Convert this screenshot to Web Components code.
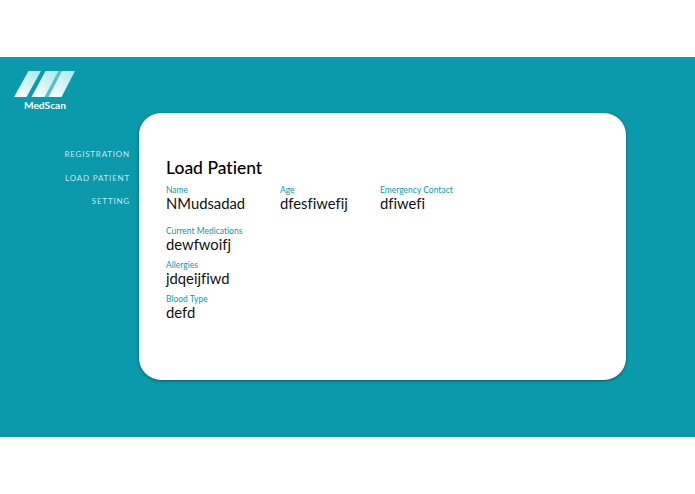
<!DOCTYPE html>
<html>
<head>
<meta charset="utf-8">
<title>MedScan</title>
<style>
html, body { margin: 0; padding: 0; background: #fff; }
body { font-family: Lato, "Liberation Sans", sans-serif; }
</style>
</head>
<body>
<med-app>
  <med-sidebar slot="side">
    <med-nav-link>REGISTRATION</med-nav-link>
    <med-nav-link>LOAD PATIENT</med-nav-link>
    <med-nav-link>SETTING</med-nav-link>
  </med-sidebar>
  <patient-card heading="Load Patient">
    <div style="display:flex;height:37px">
      <patient-field label="Name" value="NMudsadad" style="width:114px"></patient-field>
      <patient-field label="Age" value="dfesfiwefij" style="width:100px"></patient-field>
      <patient-field label="Emergency Contact" value="dfiwefi"></patient-field>
    </div>
    <patient-field label="Current Medications" value="dewfwoifj" style="margin-top:4px"></patient-field>
    <patient-field label="Allergies" value="jdqeijfiwd"></patient-field>
    <patient-field label="Blood Type" value="defd"></patient-field>
  </patient-card>
</med-app>

<script>
//App shell//////////////////////////////////////////////////////////
const appTemplate = document.createElement("template");
appTemplate.innerHTML = `
<style>
:host{
    display: block;
    height: 494px;
    padding: 57px 0;
    box-sizing: border-box;
}
.band{
    display: flex;
    height: 380px;
    background-color: #0a9aab;
}
</style>
<div class="band">
    <slot name="side"></slot>
    <slot></slot>
</div>
`;
class MedApp extends HTMLElement {
    constructor() {
        super();
        this.attachShadow({ mode: "open" });
        this.shadowRoot.appendChild(appTemplate.content.cloneNode(true));
    }
}

//Sidebar////////////////////////////////////////////////////////////
const sidebarTemplate = document.createElement("template");
sidebarTemplate.innerHTML = `
<style>
:host{
    display: block;
    width: 139px;
    flex: none;
}
.logo{
    display: flex;
    flex-direction: column;
    align-items: flex-start;
    padding: 14px 0 0 14px;
}
svg{ display: block; }
.name{
    width: 62px;
    margin-top: 2px;
    text-align: center;
    color: #fff;
    font: 700 10.2px/13px Lato, "Liberation Sans", sans-serif;
}
nav{
    display: flex;
    flex-direction: column;
    align-items: flex-end;
    gap: 9.5px;
    margin-top: 35px;
    padding-right: 9px;
}
</style>
<div class="logo">
    <svg width="61" height="26" viewBox="0 0 61 26">
        <defs>
            <linearGradient id="bar" x1="0" y1="1" x2="1" y2="0">
                <stop offset="0" stop-color="#ffffff"/>
                <stop offset="1" stop-color="#a8e9ed"/>
            </linearGradient>
        </defs>
        <polygon points="30,26 36,26 50,0 44,0" fill="#52c2ca"/>
        <polygon points="0,26 12.5,26 27,0 14.5,0" fill="url(#bar)"/>
        <polygon points="17.5,26 30.5,26 44.5,0 31.5,0" fill="url(#bar)"/>
        <polygon points="34.5,26 47.5,26 61,0 48,0" fill="url(#bar)"/>
    </svg>
    <div class="name">MedScan</div>
</div>
<nav><slot></slot></nav>
`;
class MedSidebar extends HTMLElement {
    constructor() {
        super();
        this.attachShadow({ mode: "open" });
        this.shadowRoot.appendChild(sidebarTemplate.content.cloneNode(true));
    }
}

//Nav link///////////////////////////////////////////////////////////
const navLinkTemplate = document.createElement("template");
navLinkTemplate.innerHTML = `
<style>
:host{
    display: block;
    height: 14px;
    color: #c4e9ed;
    font: 400 8px/14px Lato, "Liberation Sans", sans-serif;
    letter-spacing: .8px;
}
</style>
<slot></slot>
`;
class MedNavLink extends HTMLElement {
    constructor() {
        super();
        this.attachShadow({ mode: "open" });
        this.shadowRoot.appendChild(navLinkTemplate.content.cloneNode(true));
    }
}

//Card///////////////////////////////////////////////////////////////
const cardTemplate = document.createElement("template");
cardTemplate.innerHTML = `
<style>
:host{
    display: block;
    width: 487px;
    height: 267px;
    margin-top: 56px;
    padding: 43px 27px 0;
    box-sizing: border-box;
    background-color: #fff;
    border-radius: 22px;
    box-shadow: 0 1px 3px rgba(0, 50, 60, .6);
}
h1{
    margin: 0 0 5px;
    color: #000;
    font: 500 17.5px/24px Lato, "Liberation Sans", sans-serif;
    font-variant-ligatures: none;
}
</style>
<h1 id="heading"></h1>
<slot></slot>
`;
class PatientCard extends HTMLElement {
    constructor() {
        super();
        this.attachShadow({ mode: "open" });
        this.shadowRoot.appendChild(cardTemplate.content.cloneNode(true));
        this.shadowRoot.querySelector("#heading").innerText =
            this.getAttribute("heading");
    }
}

//Field//////////////////////////////////////////////////////////////
const fieldTemplate = document.createElement("template");
fieldTemplate.innerHTML = `
<style>
:host{
    display: block;
    height: 34px;
}
.label{
    color: #0a9cae;
    font: 400 8.5px/10px Lato, "Liberation Sans", sans-serif;
    font-variant-ligatures: none;
}
.value{
    color: #111;
    font: 400 14.8px/17px Lato, "Liberation Sans", sans-serif;
    font-variant-ligatures: none;
}
</style>
<div class="label" id="label"></div>
<div class="value" id="value"></div>
`;
class PatientField extends HTMLElement {
    constructor() {
        super();
        this.attachShadow({ mode: "open" });
        this.shadowRoot.appendChild(fieldTemplate.content.cloneNode(true));
        this.shadowRoot.querySelector("#label").innerText =
            this.getAttribute("label");
        this.shadowRoot.querySelector("#value").innerText =
            this.getAttribute("value");
    }
}

window.customElements.define("med-app", MedApp);
window.customElements.define("med-sidebar", MedSidebar);
window.customElements.define("med-nav-link", MedNavLink);
window.customElements.define("patient-card", PatientCard);
window.customElements.define("patient-field", PatientField);
</script>
</body>
</html>
